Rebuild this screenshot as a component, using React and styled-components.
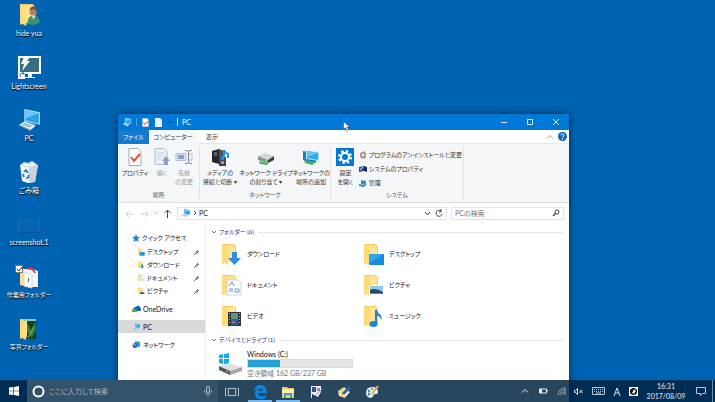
import React from "react";
import styled, { createGlobalStyle } from "styled-components";

const Global = createGlobalStyle`
  * { box-sizing: border-box; }
  html, body { margin: 0; height: 100%; overflow: hidden; }
  body, button, input {
    font-family: Lato, "Noto Sans CJK JP", sans-serif;
    font-size: 7px;
    line-height: 10px;
    font-feature-settings: "palt";
  }
  button { border: 0; padding: 0; margin: 0; background: none; color: inherit; }
  svg { display: block; flex: none; }
`;

/* ---------- layout ---------- */
const Desktop = styled.div`
  position: relative;
  height: 100vh;
  overflow: hidden;
  background: #0063b1;
  color: #111;
`;
const Shortcuts = styled.nav`
  display: grid;
  grid-template-rows: repeat(7, 1fr);
  width: 58px;
  height: calc(100vh - 34px);
`;
const Shortcut = styled.button`
  display: flex;
  flex-direction: column;
  align-items: center;
  gap: 1px;
  padding-top: 2px;
  font-size: ${(p) => (p.$kana ? 6 : 7)}px;
  color: #fff;
  white-space: nowrap;
  text-shadow: 0 1px 1px #000, 1px 1px 1px #0008;
`;

const Window = styled.section`
  position: absolute;
  top: 114px;
  left: 118px;
  right: 146px;
  bottom: 0;
  display: flex;
  flex-direction: column;
  background: #fff;
  box-shadow: 0 0 7px #0009;
`;
const TitleBar = styled.header`
  display: flex;
  flex: none;
  align-items: center;
  gap: 4px;
  height: 16px;
  padding-left: 4px;
  background: #0078d7;
  color: #fff;
`;
const Divider = styled.span`
  width: 1px;
  height: 8px;
  background: ${(p) => (p.$soft ? "#4d9de0" : "#cfe5f7")};
`;
const WindowControls = styled.div`
  display: flex;
  margin-left: auto;
`;
const WindowControl = styled.button`
  display: grid;
  place-items: center;
  width: 26px;
  height: 16px;
`;
const Tabs = styled.div`
  display: flex;
  flex: none;
  height: 14px;
  align-items: stretch;
  border-bottom: 1px solid #e6e7e8;
`;
const Tab = styled.button`
  width: ${(p) => p.$w}px;
  margin-bottom: -1px;
  font-size: 6px;
  color: ${(p) => (p.$file ? "#fff" : "#333")};
  background: ${(p) => (p.$file ? "#1979ca" : p.$active ? "#f5f6f7" : "none")};
`;
const TabTools = styled.div`
  display: flex;
  align-items: center;
  gap: 4px;
  margin-left: auto;
  padding-right: 2px;
`;
const Ribbon = styled.div`
  display: flex;
  flex: none;
  height: 59px;
  padding: 2px 0;
  background: #f5f6f7;
  border-bottom: 1px solid #dcdddf;
  font-size: 6px;
`;
const Group = styled.div`
  display: flex;
  flex-direction: column;
  justify-content: space-between;
  padding: 0 1px;
  width: ${(p) => p.$w}px;
  border-right: 1px solid #e2e3e5;
`;
const GroupTools = styled.div`
  display: flex;
`;
const GroupName = styled.div`
  text-align: center;
  color: #555;
`;
const BigTool = styled.button`
  display: flex;
  flex-direction: column;
  align-items: center;
  width: ${(p) => p.$w}px;
  padding-top: 2px;
  gap: 2px;
  font-size: 6px;
  line-height: 9px;
  white-space: nowrap;
  color: ${(p) => (p.$off ? "#999" : "#333")};
`;
const SmallTools = styled.div`
  display: flex;
  flex-direction: column;
  gap: 4px;
  padding-top: 4px;
`;
const SmallTool = styled.button`
  display: flex;
  align-items: center;
  gap: 2px;
  font-size: 6px;
  white-space: nowrap;
  color: #333;
`;
const AddressRow = styled.div`
  display: flex;
  flex: none;
  align-items: center;
  gap: 4px;
  height: 20px;
  padding: 0 5px 0 6px;
`;
const NavButton = styled.button`
  display: grid;
  place-items: center;
  width: 11px;
  height: 12px;
`;
const Field = styled.div`
  display: flex;
  align-items: center;
  gap: 2px;
  min-width: 0;
  height: 13px;
  padding: 0 3px;
  border: 1px solid #e3e3e3;
  flex: ${(p) => (p.$w ? `0 0 ${p.$w}px` : "1")};
`;
const TextInput = styled.input`
  flex: 1;
  min-width: 0;
  padding: 0;
  border: 0;
  outline: 0;
  background: none;
  color: ${(p) => (p.$light ? "#d0d9e0" : "#222")};
  &::placeholder { color: ${(p) => (p.$light ? "#a9b8c4" : "#777")}; opacity: 1; }
`;
const FieldTools = styled.div`
  display: flex;
  align-items: center;
  gap: 4px;
`;
const Body = styled.div`
  display: flex;
  flex: 1;
  min-height: 0;
`;
const Sidebar = styled.nav`
  flex: none;
  width: 88px;
  padding-top: 8px;
  border-right: 1px solid #eee;
`;
const NavBlock = styled.div`
  margin-bottom: 5px;
`;
const NavItem = styled.button`
  display: flex;
  align-items: center;
  gap: 2px;
  width: 100%;
  height: ${(p) => (p.$head ? 14 : 13)}px;
  padding: 0 5px 0 ${(p) => (p.$child ? 19 : 14)}px;
  font-size: ${(p) => (p.$kana ? 6 : 7)}px;
  white-space: nowrap;
  background: ${(p) => (p.$selected ? "#d9d9d9" : "none")};
  & > svg:nth-of-type(2) { margin-left: auto; }
`;
const Main = styled.main`
  flex: 1;
  padding: 4px 6px 0 5px;
`;
const SectionTitle = styled.h2`
  display: flex;
  align-items: center;
  gap: 2px;
  margin: 0;
  font-size: 6px;
  font-weight: 400;
  color: #1e3287;
  &::after { content: ""; flex: 1; height: 1px; margin-left: 2px; background: #e5e5e5; }
`;
const Folders = styled.div`
  display: grid;
  grid-template-columns: repeat(auto-fill, 142px);
  grid-auto-rows: 31px;
  padding: 1px 0 4px 8px;
`;
const Folder = styled.button`
  display: flex;
  align-items: center;
  gap: 4px;
  font-size: 6px;
`;
const Drive = styled.div`
  display: flex;
  gap: 4px;
  padding: 4px 0 0 7px;
`;
const DriveInfo = styled.div`
  color: #777;
`;
const DriveName = styled.div`
  color: #111;
`;
const Meter = styled.div`
  width: 106px;
  height: 9px;
  background: linear-gradient(#26a0da, #26a0da) 0 0 / ${(p) => p.$used}% 100% no-repeat #e6e6e6;
  border: 1px solid #dadada;
`;

const Taskbar = styled.footer`
  position: absolute;
  left: 0;
  right: 0;
  bottom: 0;
  display: flex;
  align-items: stretch;
  height: 22px;
  background: rgba(0, 35, 64, 0.84);
  color: #e8edf2;
`;
const StartButton = styled.button`
  display: grid;
  place-items: center;
  width: 27px;
`;
const TaskSearch = styled.label`
  display: flex;
  align-items: center;
  gap: 4px;
  width: 191px;
  padding: 0 5px;
  background: #34536b;
`;
const TaskButton = styled.button`
  display: grid;
  place-items: center;
  width: 28px;
  border: solid transparent;
  border-width: 2px 2px 0;
  box-shadow: ${(p) => (p.$open ? "inset 0 -2px #76b9ed" : "none")};
`;
const Tray = styled.div`
  display: flex;
  align-items: center;
  margin-left: auto;
`;
const TrayButton = styled.button`
  display: grid;
  place-items: center;
  width: ${(p) => p.$w || 18}px;
  height: 22px;
`;
const Clock = styled.time`
  width: 46px;
  text-align: center;
`;
const ShowDesktop = styled.button`
  width: 3px;
  height: 22px;
  border-left: 1px solid #6a87a3;
`;
const Pointer = styled.div`
  position: absolute;
  left: 343px;
  top: 121px;
`;

/* ---------- icons ---------- */
const Svg = ({ w = 16, h = w, box = `0 0 ${w} ${h}`, children }) => (
  <svg width={w} height={h} viewBox={box} fill="none" aria-hidden="true">{children}</svg>
);
const Stroke = ({ d, w = 9, h = w, c = "currentColor", s = 1 }) => (
  <Svg w={w} h={h}><path d={d} stroke={c} strokeWidth={s} /></Svg>
);

const Monitor = ({ s = 24 }) => (
  <Svg w={s} box="0 0 24 24">
    <path d="M7 2l15 3v12L7 14z" fill="#b7e5fb" />
    <path d="M8 3l13 3v10L8 13z" fill="#28a2e8" />
    <path d="M8 3l13 3L8 11z" fill="#68c5f5" />
    <path d="M12 15l5 1v3l-6-1z" fill="#688fae" />
    <path d="M2 17l5-3 11 4-5 4z" fill="#e8f1f8" />
    <path d="M4 17l3-2 8 3-3 2z" fill="#9fbed4" />
    <path d="M2 17l11 5v1L2 18z" fill="#829fb6" />
  </Svg>
);
const NetPlace = () => (
  <Svg w={18}>
    <path d="M2 12l9 2 1 2-2 1-7-2z" fill="#42b56b" />
    <path d="M1 3l13 2v10L1 12z" fill="#1c7fc0" />
    <path d="M4 2l13 2v9L4 11z" fill="#b7e5fb" />
    <path d="M5 3l11 2v7L5 10z" fill="#35a9e8" />
    <path d="M5 3l11 2-11 4z" fill="#66c4f2" />
  </Svg>
);

const overlays = {
  download: <path d="M13 10h5v6h4l-6.500 7L9 16h4z" fill="#2f8ee0" />,
  desktop: <><path d="M8 12h15v11H8z" fill="#158ee0" /><path d="M8 12h15L8 21z" fill="#2ca5f2" /></>,
  document: <><path d="M8 7h11l3 3v12H8z" fill="#fff" stroke="#c9d6e0" /><path d="M10 13l3-4 2 4M16 16h4v3h-4zM10 16h4M10 18h4" stroke="#5b9ad6" /></>,
  picture: <><path d="M8 12h15v10H8z" fill="#fff" /><path d="M9 13h13v8H9z" fill="#8fc8f2" /><path d="M9 17q5-3 13 2v2H9z" fill="#2c4a66" /><path d="M9 20h13v1H9z" fill="#408db0" /></>,
  video: <><path d="M9 8h13v14H9z" fill="#2f3437" /><path d="M12 9h7v6h-7z" fill="#4d9b8c" /><path d="M12 15h7v6h-7z" fill="#2c5cb4" /><path d="M14 11h3v3h-3zM13 17h3v2h-3z" fill="#c66b35" /><path d="M10.500 9v12M20.500 9v12" stroke="#b6b6b6" strokeDasharray="1 2" /></>,
  music: <><path d="M15 6v14" stroke="#1c83d8" strokeWidth="2" /><path d="M15 5c0 4 8 5 5 12 0-4-2-5-5-6z" fill="#1c83d8" /><ellipse cx="12.500" cy="20" rx="4" ry="3" fill="#1c83d8" /></>,
  user: <><path d="M10 21c0-6 3-8 6-8s6 3 6 7l-6 2z" fill="#3a9270" /><circle cx="15.500" cy="9.500" r="3.500" fill="#b08563" /><path d="M12 8q1-4 4-4 4 1 3 6l-2-3z" fill="#695445" /><path d="M14 13l2 4 2-4z" fill="#cfe0d8" /></>,
  work: <><path d="M8 5l8-1 6 2v16H9z" fill="#f6f7f8" /><path d="M12 4q5-1 7 4" stroke="#db4545" strokeWidth="2" /><path d="M8 7l8 2v14l-8-2z" fill="#fff" stroke="#d8d8d8" /><path d="M12 13l1 1-1 3" stroke="#555" /></>,
  photos: <><path d="M10 4h9v18h-9z" fill="#173f24" /><path d="M10 6l4 7 4-8 1 7-4 9-5-6z" fill="#3b7a34" /><path d="M11 21l6-11" stroke="#8ab25b" /><path d="M5 2h14v2H7z" fill="#80d0b0" /></>,
};
const FolderIcon = ({ kind, s = 24 }) => (
  <Svg w={s} box="0 0 24 24">
    <path d="M3 2h12l2 2v16H7l-4 2z" fill="#f0cb66" />
    <path d="M8 3h8v17H8z" fill="#ffe395" />
    <path d="M3 2l6 3v18l-6-3z" fill="#ffdc78" />
    {overlays[kind]}
  </Svg>
);
const Lightscreen = () => (
  <Svg w={25}>
    <path d="M2 2h21v16H2z" fill="#356e82" stroke="#fff" strokeWidth="2" />
    <path d="M11 19h4v3h3v1H8v-1h3z" fill="#fff" />
    <path d="M7 2h6l-3 4h3L5 16l2-7H4z" fill="#fff" />
    <path d="M1 17h7v7H1z" fill="#fff" />
    <path d="M3 22c0-3 1-4 4-4M5 18h2v2" stroke="#2573bd" />
  </Svg>
);
const Bin = () => (
  <Svg w={24}>
    <path d="M3 5l4-3 4 1 4-2 6 4-3 17-7 1-6-2z" fill="#dfe7ec" />
    <path d="M4 6l8 2v15l-6-2z" fill="#f6f9fa" />
    <path d="M12 8l9-3-3 17-6 1z" fill="#c8d3dc" />
    <path d="M5 5l4-2 3 2 4-2 3 2-7 2z" fill="#fff" stroke="#b9c4cb" strokeWidth=".5" />
    <path d="M7 12l2-2 2 3M12 15l-1 3H9M7 17l-1-3" stroke="#1673c8" strokeWidth="1.700" />
  </Svg>
);
const Shot = () => (
  <Svg w={24}><path d="M1.500 8.500h21v12h-21z" fill="#0863ae" stroke="#0f70b9" /><path d="M1 20.500h22" stroke="#06529a" /></Svg>
);
const WorkFolder = () => (
  <Svg w={32} h={24} box="-6 0 32 24">
    <path d="M1 4h14v17H6l-5-1z" fill="#ffe08a" />
    <g transform="translate(-3)">{overlays.work}</g>
    <path d="M-3.500 .5h7v7h-7z" fill="#fff" stroke="#777" /><path d="M-2 4l2 2 3-4" stroke="#333" />
  </Svg>
);
const CheckDoc = ({ s = 18 }) => (
  <Svg w={s} box="0 0 18 18"><path d="M3 .5h9l3 3v14H3z" fill="#fff" stroke="#a6abb0" /><path d="M5 9l3 4 6-7" stroke="#e15122" strokeWidth="2" /></Svg>
);
const OpenDoc = ({ s = 18 }) => (
  <Svg w={s} box="0 0 18 18"><path d="M2 .5h9l3 3v13H2z" fill="#e9eef7" stroke="#b2bfd6" /><path d="M4 5h7M4 8h7M4 11h4" stroke="#ccd6e8" /><path d="M13 8l4 5h-2v4h-4v-4H9z" fill="#8f9ec2" /></Svg>
);
const PlainDoc = () => (
  <Svg w={9}><path d="M1 0h5l2 2v7H1z" fill="#e6f1fa" /></Svg>
);
const Rename = () => (
  <Svg w={18}><path d="M1 5.500h10v7H1z" fill="#dae3f1" stroke="#b3bfd4" /><path d="M3 7h6v4H3z" fill="#8a9fcb" /><path d="M10 2.500h2l1.500 1 1.500-1h2M13.500 3v12M10 15.500h2l1.500-1 1.500 1h2" stroke="#7f8797" /><path d="M14 6h3v6h-3" stroke="#b3bfd4" /></Svg>
);
const Media = () => (
  <Svg w={18}><path d="M1 3l7-2v15l-7-2z" fill="#25292e" /><path d="M8 1l5 2v12l-5 1z" fill="#4b535b" /><path d="M3 5h3M3 7h3" stroke="#97a2ad" /><path d="M8 9h7v9H8z" fill="#3e454b" /><path d="M13 2v8M13 2q1 3 4 4v4" stroke="#2492e6" strokeWidth="2" /><circle cx="11.500" cy="10" r="2" fill="#2492e6" /><path d="M10 13h3v3h-3z" fill="#8ca1b0" /></Svg>
);
const NetDrive = () => (
  <Svg w={18}><path d="M1 8l7-3 9 3-6 4z" fill="#d6d8da" /><path d="M1 8l10 4v3L1 12z" fill="#8d9295" /><path d="M11 12l6-4v4l-6 3z" fill="#383d40" /><path d="M2 13l9 2v2l-8-1z" fill="#3eb36b" /><path d="M8 12.500h2" stroke="#54ef67" /></Svg>
);
const Gear = () => (
  <Svg w={18}><path d="M0 0h18v18H0z" fill="#0078d7" /><circle cx="9" cy="9" r="5.500" stroke="#fff" strokeWidth="3" strokeDasharray="2.300 2.020" /><circle cx="9" cy="9" r="4" stroke="#fff" strokeWidth="2" /></Svg>
);
const Programs = () => (
  <Svg w={8}><path d="M1 2l4-2 2 2v5L3 8 1 6z" fill="#b6a48d" /><circle cx="4" cy="4" r="2" fill="#edf2f5" stroke="#8b8f92" /></Svg>
);
const SystemIcon = () => (
  <Svg w={8}><path d="M0 2l5-1v5L0 7z" fill="#294db0" /><path d="M5 1l3 1v5L5 6z" fill="#1a2452" /><path d="M1 5l3-3" stroke="#dce9ff" /></Svg>
);
const Manage = () => (
  <Svg w={8}><path d="M2 1l5 1v4L2 5z" fill="#2c93d3" /><path d="M0 5l5 1 3-1-3 3-5-1z" fill="#577f9e" /></Svg>
);
const Star = () => <Svg w={8}><path d="M4 0l1.200 2.700 2.800.3-2.100 2L6.500 8 4 6.500 1.500 8l.6-3L0 3l2.800-.3z" fill="#1c8adb" /></Svg>;
const Pin = () => <Svg w={6}><path d="M3 1l2 2M4 2L2 3l1 2M2.500 3.500L0 6M3 3l1 1" stroke="#777" /></Svg>;
const OneDriveIcon = () => (
  <Svg w={9}><path d="M1 6q0-3 3-3 2-3 4 0 2 3 0 4H2z" fill="#0c66b8" /><path d="M0 8q-1-3 2-3 3-1 3 3z" fill="#62a744" /></Svg>
);
const NetworkIcon = () => (
  <Svg w={9}><path d="M3 1l5 1v5L3 6z" fill="#2a9ce2" /><circle cx="3" cy="5.500" r="2.500" fill="#1a67ae" /><path d="M1 5q2-2 3 1" stroke="#8dd0f6" /></Svg>
);
const WinLogo = () => (
  <Svg w={10}><path d="M0 1.500L4.300 1v3.700H0zM4.900.9L10 0v4.700H4.900zM0 5.300h4.300V9L0 8.500zM4.900 5.300H10V10l-5.100-.9z" fill="#fff" /></Svg>
);
const DriveIcon = () => (
  <Svg w={25} h={27}>
    <path d="M1 6l4-1v4H1zM6 5l5-1v5H6zM1 10h4v5l-4-1zM6 10h5v6l-5-1z" fill="#12aee5" />
    <path d="M1 17l9-3 14 4-12 4z" fill="#dedfe0" />
    <path d="M1 17l11 5v4L1 21z" fill="#55595c" /><path d="M12 22l12-4v4l-12 4z" fill="#a4a7a9" /><path d="M8 22.500h2" stroke="#5be667" />
  </Svg>
);
const Cortana = () => <Svg w={13}><circle cx="6.500" cy="6.500" r="5" stroke="#fff" strokeWidth="2" /></Svg>;
const Mic = () => <Svg w={10} h={12}><rect x="3.500" y="1.500" width="3" height="6" rx="1.500" stroke="#b9c7d2" /><path d="M1.500 5v2l2 2h3l2-2V5M5 9v3" stroke="#91a5b4" /></Svg>;
const TaskView = () => <Svg w={14}><path d="M3.500 3.500h7v7h-7zM2 3.500H.5v7H2M12 3.500h1.500v7H12" stroke="#b0bfcb" /></Svg>;
const Edge = () => (
  <Svg w={14}><path d="M1 7C1 2 4 0 7.500 0 12 0 14 3 13.500 8H5c.3 4 5 4 8 2v3C7 15.500 1.500 14 2 8.500 2.500 6 4 4.500 6 4 2.500 4.300 1.500 5.500 1 7zM5.200 5.800h4.600C9.800 2.500 5.500 3 5.200 5.800z" fill="#0a84e4" /></Svg>
);
const Explorer = () => (
  <Svg w={14}><path d="M1 2h5l1 1h6v10H1z" fill="#f4c954" /><path d="M1 4h12v4H1z" fill="#fff1af" /><path d="M3 8h8v5H9v-3H5v3H3z" fill="#3d9fd8" /></Svg>
);
const AppPicture = () => (
  <Svg w={13}><path d="M1 0h10v12H1z" fill="#ecf0f4" /><path d="M2 1h4v5H2z" fill="#3550a3" /><path d="M7 2h3v3H7z" fill="#b27f8b" /><path d="M2 8l6 3 3-5v6H2z" fill="#26365e" /><path d="M6 9l6-6" stroke="#8d9dd2" /></Svg>
);
const AppPen = () => (
  <Svg w={14}><path d="M1 6l6-4 6 5-5 6-6-2z" fill="#f1d785" /><path d="M2 9q5 3 9-2" stroke="#fff" strokeWidth="2" /><path d="M5 8l7-7 2 2-7 7z" fill="#2c5db4" /><path d="M4 11l1-3 2 2z" fill="#eca51c" /></Svg>
);
const Paint = () => (
  <Svg w={14}><path d="M1 8q0-6 6-6 6 0 6 5 0 3-4 2-1 4-4 4-4-1-4-5z" fill="#e1edf5" /><circle cx="4" cy="6" r="1.200" fill="#35a565" /><circle cx="7" cy="4" r="1" fill="#dc5142" /><circle cx="4" cy="9" r="1.200" fill="#347cce" /><path d="M7 9l6-8" stroke="#e5b044" strokeWidth="2" /></Svg>
);
const Search = () => <Svg w={8}><circle cx="5" cy="3" r="2" stroke="#444" /><path d="M3.500 4.500L1 7" stroke="#444" strokeWidth="1.500" /></Svg>;

/* ---------- data ---------- */
const shortcuts = [
  ["hide yua", <FolderIcon kind="user" s={25} />],
  ["Lightscreen", <Lightscreen />],
  ["PC", <Monitor s={25} />],
  ["ごみ箱", <Bin />],
  ["screenshot.1", <Shot />],
  ["作業用フォルダー", <WorkFolder />, true],
  ["写真フォルダー", <FolderIcon kind="photos" />, true],
];
const quick = [["デスクトップ", "desktop"], ["ダウンロード", "download"], ["ドキュメント", "document"], ["ピクチャ", "picture"]];
const folders = [
  ["ダウンロード", "download"], ["デスクトップ", "desktop"],
  ["ドキュメント", "document"], ["ピクチャ", "picture"],
  ["ビデオ", "video"], ["ミュージック", "music"],
];

const Tool = ({ icon, lines, ...rest }) => (
  <BigTool {...rest}>
    {icon}
    <span>{lines.map((t) => <div key={t}>{t}</div>)}</span>
  </BigTool>
);

export default function App() {
  return (
    <>
      <Global />
      <Desktop>
        <Shortcuts>
          {shortcuts.map(([name, icon, kana]) => (
            <Shortcut key={name} $kana={kana}>{icon}<span>{name}</span></Shortcut>
          ))}
        </Shortcuts>

        <Window aria-label="PC">
          <TitleBar>
            <Monitor s={10} />
            <Divider $soft />
            <CheckDoc s={9} />
            <PlainDoc />
            <Stroke w={6} d="M1 2l2 2 2-2" c="#064a88" />
            <Divider />
            <span>PC</span>
            <WindowControls>
              <WindowControl aria-label="最小化"><Stroke d="M1 4.500h6" c="#d8eaf9" w={8} /></WindowControl>
              <WindowControl aria-label="最大化"><Stroke d="M1.500 1.500h5v5h-5z" c="#d8eaf9" w={8} /></WindowControl>
              <WindowControl aria-label="閉じる"><Stroke d="M1 1l6 6M7 1L1 7" c="#d8eaf9" w={8} /></WindowControl>
            </WindowControls>
          </TitleBar>
          <Tabs>
            <Tab $file $w={31}>ファイル</Tab>
            <Tab $active $w={48}>コンピューター</Tab>
            <Tab $w={30}>表示</Tab>
            <TabTools>
              <Stroke w={8} d="M1 5.500l3-3 3 3" c="#8da58d" />
              <Svg w={9}>
                <circle cx="4.500" cy="4.500" r="4.500" fill="#0c66c2" />
                <path d="M3 3.500q0-1.500 1.500-1.500T6 3.500q0 1-1.500 1.500M4.500 6v1.500" stroke="#fff" />
              </Svg>
            </TabTools>
          </Tabs>
          <Ribbon>
            <Group $w={82}>
              <GroupTools>
                <Tool $w={32} icon={<CheckDoc />} lines={["プロパティ"]} />
                <Tool $w={22} $off icon={<OpenDoc />} lines={["開く"]} />
                <Tool $w={22} $off icon={<Rename />} lines={["名前", "の変更"]} />
              </GroupTools>
              <GroupName>場所</GroupName>
            </Group>
            <Group $w={131}>
              <GroupTools>
                <Tool $w={38} icon={<Media />} lines={["メディアの", "接続と切断 ▾"]} />
                <Tool $w={54} icon={<NetDrive />} lines={["ネットワーク ドライブ", "の割り当て ▾"]} />
                <Tool $w={36} icon={<NetPlace />} lines={["ネットワークの", "場所の追加"]} />
              </GroupTools>
              <GroupName>ネットワーク</GroupName>
            </Group>
            <Group $w={133}>
              <GroupTools>
                <Tool $w={28} icon={<Gear />} lines={["設定", "を開く"]} />
                <SmallTools>
                  <SmallTool><Programs />プログラムのアンインストールと変更</SmallTool>
                  <SmallTool><SystemIcon />システムのプロパティ</SmallTool>
                  <SmallTool><Manage />管理</SmallTool>
                </SmallTools>
              </GroupTools>
              <GroupName>システム</GroupName>
            </Group>
          </Ribbon>
          <AddressRow>
            <NavButton aria-label="戻る"><Stroke d="M8 5H1M4 2L1 5l3 3" c="#ccc" /></NavButton>
            <NavButton aria-label="進む"><Stroke d="M1 5h7M5 2l3 3-3 3" c="#ccc" /></NavButton>
            <Stroke w={4} d="M0 1l2 2 2-2" c="#ccc" />
            <NavButton aria-label="上へ"><Stroke d="M4.500 9V1M1.500 4l3-3 3 3" c="#444" /></NavButton>
            <Field>
              <Monitor s={10} />
              <Stroke w={4} h={6} d="M1 1l2 2-2 2" c="#444" />
              <TextInput aria-label="アドレス" defaultValue="PC" />
              <FieldTools>
                <Stroke w={7} d="M1 2l2.500 3L6 2" c="#444" />
                <Stroke w={8} d="M6 2A3 3 0 1 0 7 5M6 0v3H4" c="#444" />
              </FieldTools>
            </Field>
            <Field $w={113}>
              <TextInput aria-label="PCの検索" placeholder="PCの検索" />
              <Search />
            </Field>
          </AddressRow>
          <Body>
            <Sidebar>
              <NavBlock>
                <NavItem $head $kana><Star />クイック アクセス</NavItem>
                {quick.map(([name, kind]) => (
                  <NavItem $child $kana key={kind}><FolderIcon kind={kind} s={8} />{name}<Pin /></NavItem>
                ))}
              </NavBlock>
              <NavBlock><NavItem><OneDriveIcon />OneDrive</NavItem></NavBlock>
              <NavBlock><NavItem $selected><Monitor s={9} />PC</NavItem></NavBlock>
              <NavBlock><NavItem $kana><NetworkIcon />ネットワーク</NavItem></NavBlock>
            </Sidebar>
            <Main>
              <SectionTitle><Stroke w={6} d="M1 2l2 2 2-2" c="#777" />フォルダー (6)</SectionTitle>
              <Folders>
                {folders.map(([name, kind]) => <Folder key={kind}><FolderIcon kind={kind} />{name}</Folder>)}
              </Folders>
              <SectionTitle><Stroke w={6} d="M1 2l2 2 2-2" c="#777" />デバイスとドライブ (1)</SectionTitle>
              <Drive>
                <DriveIcon />
                <DriveInfo>
                  <DriveName>Windows (C:)</DriveName>
                  <Meter $used={31} />
                  <div>空き領域 162 GB/237 GB</div>
                </DriveInfo>
              </Drive>
            </Main>
          </Body>
        </Window>

        <Taskbar>
          <StartButton aria-label="スタート"><WinLogo /></StartButton>
          <TaskSearch>
            <Cortana />
            <TextInput $light aria-label="検索" placeholder="ここに入力して検索" />
            <Mic />
          </TaskSearch>
          <TaskButton aria-label="タスク ビュー"><TaskView /></TaskButton>
          <TaskButton $open aria-label="Edge"><Edge /></TaskButton>
          <TaskButton $open aria-label="エクスプローラー"><Explorer /></TaskButton>
          <TaskButton aria-label="画像"><AppPicture /></TaskButton>
          <TaskButton aria-label="ペン"><AppPen /></TaskButton>
          <TaskButton aria-label="ペイント"><Paint /></TaskButton>
          <Tray>
            <TrayButton aria-label="隠れているアイコン"><Stroke w={8} d="M1 5.500l3-3 3 3" /></TrayButton>
            <TrayButton aria-label="バッテリー"><Svg w={9} h={6}><path d="M.5 1h7v4h-7zM8 2.500h1v1" stroke="#e8edf2" /><path d="M1 1h2v4H1z" fill="#e8edf2" /></Svg></TrayButton>
            <TrayButton aria-label="ネットワーク"><Svg w={9}><path d="M1 8A7 7 0 0 1 8 1M3 8a5 5 0 0 1 5-5M5 8a3 3 0 0 1 3-3M8 1v7" stroke="#8fa3b3" /></Svg></TrayButton>
            <TrayButton $w={16} aria-label="音量"><Svg w={9}><path d="M.5 3.500h1l2-2v6l-2-2h-1zM5.500 3l3 3M8.500 3l-3 3" stroke="#dbe4ec" /></Svg></TrayButton>
            <TrayButton $w={25} aria-label="キーボード"><Svg w={13} h={8}><path d="M.5.5h12v7H.5z" stroke="#b9c9d9" /><path d="M2 2.500h9M2 4.500h9" stroke="#b9c9d9" strokeDasharray="1 1" /><path d="M4 6h5" stroke="#b9c9d9" /></Svg></TrayButton>
            <TrayButton $w={12} aria-label="英字入力"><Svg w={8} h={9}><path d="M1 9l3-8 3 8M2 6h4" stroke="#dbe4ec" /></Svg></TrayButton>
            <TrayButton $w={20} aria-label="IME"><Svg w={9}><path d="M0 0h9v9H0z" fill="#fff" /><circle cx="4.500" cy="4.500" r="3.500" fill="#111" /><path d="M5 2l2 2-2 3-2-1z" fill="#e9e4da" /></Svg></TrayButton>
            <Clock><div>16:31</div><div>2017/08/09</div></Clock>
            <TrayButton $w={23} aria-label="通知"><Svg w={10}><path d="M.5 1.500h9v6h-3l-2 2v-2h-4z" stroke="#b9c9d9" /></Svg></TrayButton>
            <ShowDesktop aria-label="デスクトップの表示" />
          </Tray>
        </Taskbar>

        <Pointer>
          <Svg w={7} h={11}><path d="M.5.5v8l2-2 1.500 3.500 1.500-1L4 6h2.500z" fill="#fff" stroke="#345" strokeWidth=".5" /></Svg>
        </Pointer>
      </Desktop>
    </>
  );
}
